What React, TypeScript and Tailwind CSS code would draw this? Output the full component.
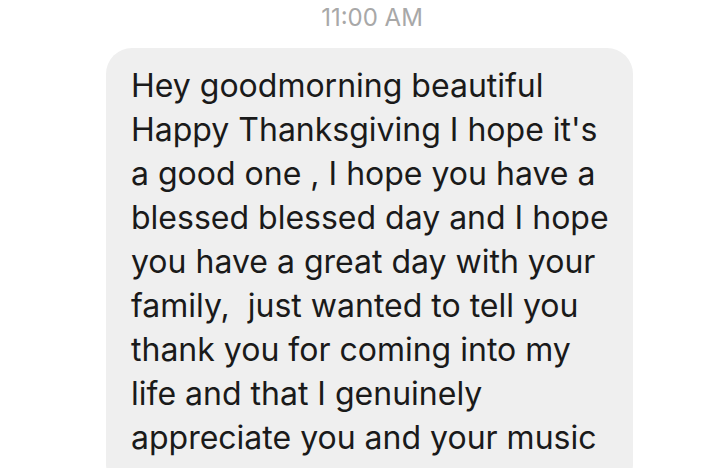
import React from 'react';

const lines = [
  'Hey goodmorning beautiful',
  "Happy Thanksgiving I hope it's",
  'a good one , I hope you have a',
  'blessed blessed day and I hope',
  'you have a great day with your',
  'family,  just wanted to tell you',
  'thank you for coming into my',
  'life and that I genuinely',
  'appreciate you and your music',
];

export default function App() {
  return (
    <div className="w-[724px] h-[468px] overflow-hidden bg-white" style={{ fontFamily: 'Inter, "Liberation Sans", sans-serif' }}>
      {/* Timestamp */}
      <div className="h-[48px] pt-[4px] pl-[20px] text-center text-[24px] leading-[28px] text-[#a8a8a8]">11:00 AM</div>

      {/* Message bubble */}
      <div className="ml-[106px] w-[527px] rounded-[26px] bg-[#efefef] pl-[25px] pt-[16px] pb-[30px]">
        {lines.map((line, i) => (
          <div key={i} className="whitespace-pre text-[32px] leading-[44px] text-[#1a1a1a]">
            {line}
          </div>
        ))}
      </div>
    </div>
  );
}
